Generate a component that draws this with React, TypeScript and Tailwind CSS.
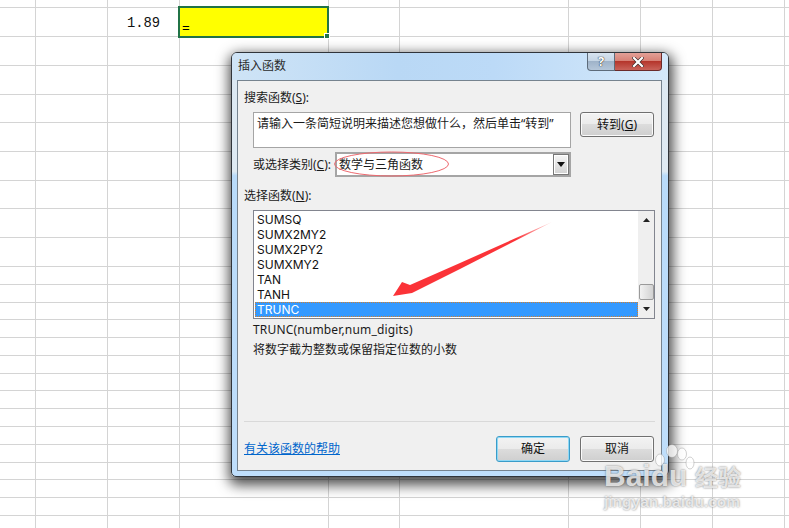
import React from "react";

const COLS = 10;
const ROWS = 25;

function Btn({ label, primary, className }: { label: React.ReactNode; primary?: boolean; className: string }) {
  return (
    <div
      className={`flex items-center justify-center rounded-[3px] border text-[12px] text-[#111] bg-[linear-gradient(#f3f3f3,#ebebeb_48%,#dcdcdc_50%,#cfcfcf)] ${
        primary ? "border-[#3a9cc9] shadow-[inset_0_0_0_1px_#8fd8f5]" : "border-[#707070] shadow-[inset_0_0_0_1px_#fafafa]"
      } ${className}`}
    >
      {label}
    </div>
  );
}

const FUNCS = ["SUMSQ", "SUMX2MY2", "SUMX2PY2", "SUMXMY2", "TAN", "TANH"];

export default function App() {
  return (
    <div className="relative h-[528px] w-[789px] overflow-hidden bg-white font-['Noto_Sans','Noto_Sans_CJK_SC',sans-serif]">
      {/* sheet */}
      <div className="grid grid-cols-[36px_72px_72px_149px_71px_169px_72px_72px_72px_4px] grid-rows-[8px_29px_29px_29px_28px_29px_29px_28px_29px_29px_18px_18px_17px_18px_18px_18px_17px_18px_18px_18px_18px_17px_18px_18px_13px]">
        {Array.from({ length: COLS * ROWS }).map((_, i) => (
          <div
            key={i}
            className={i % COLS === COLS - 1 ? "border-b border-[#d4d4d4]" : "border-b border-r border-[#d4d4d4]"}
          />
        ))}
      </div>

      {/* value cell */}
      <div className="absolute left-[127px] top-[15px] font-['Liberation_Mono',monospace] text-[13.8px] leading-[17px] text-[#111]">
        1.89
      </div>

      {/* selected cell */}
      <div className="absolute left-[178px] top-[6px] h-[32px] w-[151px] border-2 border-[#217346] bg-[#ffff00]">
        <span className="absolute left-[2px] top-[13px] font-['Liberation_Mono',monospace] text-[13px] leading-[16px] text-black">=</span>
        <span className="absolute -bottom-[3px] -right-[3px] h-[6px] w-[6px] border border-white bg-[#217346]" />
      </div>

      {/* dialog */}
      <div className="absolute left-[231px] top-[52px] flex h-[425px] w-[438px] flex-col rounded-[6px] rounded-bl-[5px] border border-[#30343a] bg-[linear-gradient(#dce8f2,#dfeaf3_28%,#b9dbfa_29%,#bfdefb)] px-[5px] pb-[5px] shadow-[1px_5px_13px_3px_rgba(0,0,0,0.7)]">
        {/* title bar */}
        <div className="-mx-[5px] flex h-[27px] shrink-0 rounded-t-[5px] bg-[linear-gradient(90deg,#cfe4f6,#b9d8f5_38%,#bcdaf7_60%,#d4e8fa_100%)] pl-[6px] pr-[6px]">
          <div className="flex-1 pt-[4px] text-[12px] leading-[18px] text-[#2b2b2b]">插入函数</div>
          <div className="flex h-[18px] w-[28px] items-center justify-center rounded-bl-[4px] border border-t-0 border-[#5d6b7a] bg-[linear-gradient(#d7e3ef,#c4d4e4_48%,#9fb3c9_50%,#b4c6d9)] text-[13px] font-bold leading-none text-white [text-shadow:0_0_1px_#222,0_0_1px_#222]">
            ?
          </div>
          <div className="flex h-[18px] w-[47px] items-center justify-center rounded-br-[4px] border border-l-0 border-t-0 border-[#6b2a2a] bg-[linear-gradient(#e3a097,#d68075_48%,#b5362c_50%,#c9635a)]">
            <svg width="12" height="10" viewBox="0 0 12 10">
              <path d="M2 1 L10 9 M10 1 L2 9" stroke="#3a2a2a" strokeWidth="3.4" strokeLinecap="square" />
              <path d="M2 1 L10 9 M10 1 L2 9" stroke="#fff" strokeWidth="2.2" strokeLinecap="square" />
            </svg>
          </div>
        </div>

        {/* panel */}
        <div className="flex h-[391px] w-[425px] flex-col border border-[#76838f] bg-[#f0f0f0] pl-[6px] text-[12px] leading-[16px] text-[#1a1a1a]">
          <div className="mt-[9px] h-[15px]">
            搜索函数(<span className="underline">S</span>):
          </div>

          <div className="ml-[9px] mt-[7px] flex h-[36px] items-start">
            <div className="h-[36px] w-[318px] border border-[#a5a5a5] bg-white pl-[3px] pt-[3px]">
              请输入一条简短说明来描述您想做什么，然后单击“转到”
            </div>
            <Btn className="ml-[9px] h-[25px] w-[74px]" label={<>转到(<span className="underline">G</span>)</>} />
          </div>

          <div className="ml-[9px] mt-[4px] flex h-[25px] items-center">
            <div className="w-[82px] pt-[1px]">
              或选择类别(<span className="underline">C</span>):
            </div>
            <div className="flex h-[25px] w-[236px] items-center justify-between border-2 border-[#a5a5a5] bg-white pl-[2px]">
              <span>数学与三角函数</span>
              <div className="flex h-[21px] w-[16px] items-center justify-center border border-[#777] bg-[linear-gradient(#f6f6f6,#d2d2d2)] shadow-[inset_0_0_0_1px_#fff]">
                <svg width="8" height="5" viewBox="0 0 8 5"><path d="M0 0H8L4 5Z" fill="#111" /></svg>
              </div>
            </div>
          </div>

          <div className="mt-[11px] h-[15px]">
            选择函数(<span className="underline">N</span>):
          </div>

          <div className="ml-[9px] mt-[7px] flex h-[109px] w-[402px] border border-[#82858f] bg-white font-['Inter','Noto_Sans_CJK_SC',sans-serif] text-[12px]">
            <div className="flex flex-1 flex-col pl-[1px] pt-[1px]">
              {FUNCS.map((f) => (
                <div key={f} className="h-[15px] pl-[2px] leading-[15px] text-[#111]">{f}</div>
              ))}
              <div className="h-[15px] border border-dotted border-[#d08030] bg-[#3399ff] pl-[1px] leading-[13px] text-white">TRUNC</div>
            </div>
            <div className="flex w-[16px] flex-col items-center bg-[#efefef]">
              <div className="flex h-[18px] w-full items-center justify-center">
                <svg width="7" height="4" viewBox="0 0 7 4"><path d="M0 4H7L3.5 0Z" fill="#222" /></svg>
              </div>
              <div className="mt-[55px] h-[16px] w-[15px] rounded-[2px] border border-[#9a9a9a] bg-[linear-gradient(90deg,#f2f2f2,#d2d2d2)]" />
              <div className="flex h-[17px] w-full items-center justify-center">
                <svg width="7" height="4" viewBox="0 0 7 4"><path d="M0 0H7L3.5 4Z" fill="#222" /></svg>
              </div>
            </div>
          </div>

          <div className="ml-[9px] mt-[3px] h-[16px] tracking-[0.17px]">TRUNC(number,num_digits)</div>
          <div className="ml-[9px] mt-[4px] h-[16px]">将数字截为整数或保留指定位数的小数</div>

          <div className="mr-[6px] mt-[63px] h-px bg-[#d9d9d9]" />

          <div className="mr-[7px] mt-[14px] flex items-center">
            <div className="flex-1 text-[#0066cc] underline">有关该函数的帮助</div>
            <Btn primary className="h-[26px] w-[74px]" label="确定" />
            <Btn className="ml-[10px] h-[26px] w-[74px]" label="取消" />
          </div>
        </div>
      </div>

      {/* hand-drawn annotations */}
      <svg className="absolute left-0 top-0" width="789" height="528" viewBox="0 0 789 528">
        <defs>
          <linearGradient id="tail" x1="552" y1="222" x2="515" y2="238" gradientUnits="userSpaceOnUse">
            <stop offset="0" stopColor="#ffd8d8" />
            <stop offset="1" stopColor="#fb3338" />
          </linearGradient>
        </defs>
        <ellipse cx="391.5" cy="164" rx="57" ry="12" fill="none" stroke="#ee6a70" strokeWidth="1" />
        <polygon points="552,222 460,263 410,285 402,282 393,296 412,293 460,269" fill="url(#tail)" />
      </svg>

      {/* watermark */}
      <div className="absolute left-[604px] top-[443px] h-[70px] w-[150px]">
        <svg className="absolute left-[46px] top-0" width="46" height="30" viewBox="0 0 46 30">
          <g fill="#ffffff" fillOpacity="0.75" stroke="#8c8c8c" strokeOpacity="0.5" strokeWidth="0.8">
            <ellipse cx="10" cy="17" rx="4.5" ry="6" />
            <ellipse cx="22" cy="8" rx="5.5" ry="6.5" />
            <ellipse cx="32" cy="11" rx="4.5" ry="6" />
            <ellipse cx="40" cy="20" rx="4" ry="6" />
          </g>
        </svg>
        <div className="absolute left-0 top-[17px] font-['Liberation_Sans',sans-serif] text-[30px] font-bold leading-[32px] text-white/75 [text-shadow:0_0_2px_rgba(80,80,80,0.8)]">
          Baidu
        </div>
        <div className="absolute left-[91px] top-[22px] text-[23px] font-bold leading-[24px] text-white/75 [text-shadow:0_0_2px_rgba(80,80,80,0.8)]">
          经验
        </div>
        <div className="absolute left-0 top-[50px] font-['Liberation_Sans',sans-serif] text-[15.5px] font-bold leading-[18px] text-white/75 [text-shadow:0_0_2px_rgba(80,80,80,0.75)]">
          jingyan.baidu.com
        </div>
      </div>
    </div>
  );
}
